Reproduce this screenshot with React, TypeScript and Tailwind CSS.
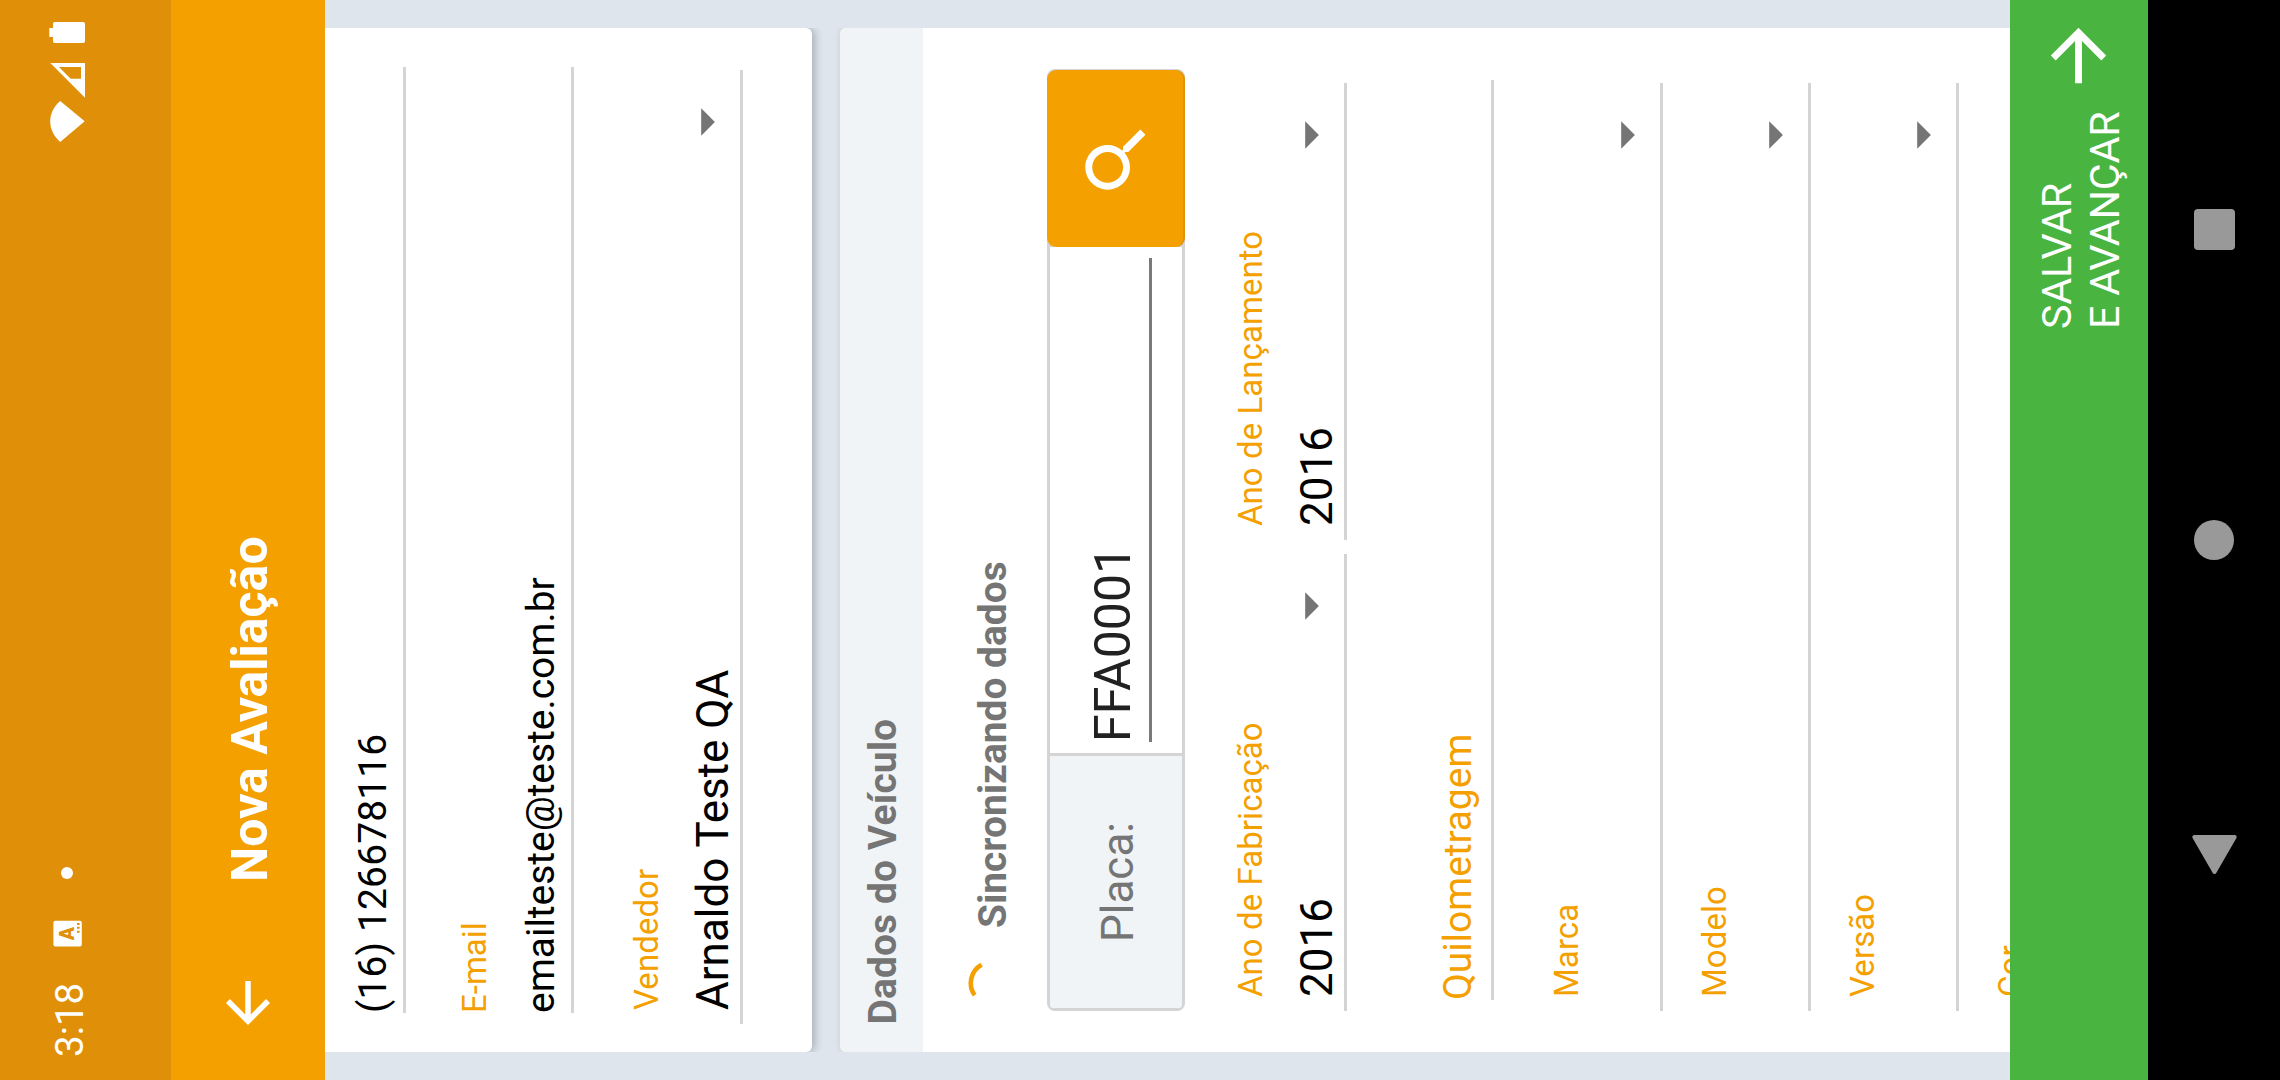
import React from "react";

const ARROW_FORWARD = "M12 4l-1.41 1.41L16.17 11H4v2h12.17l-5.58 5.59L12 20l8-8z";
const ARROW_BACK = "M20 11H7.83l5.59-5.59L12 4l-8 8 8 8 1.41-1.41L7.83 13H20v-2z";
const SEARCH =
  "M15.5 14h-.79l-.28-.27C15.41 12.59 16 11.11 16 9.5 16 5.91 13.09 3 9.5 3S3 5.91 3 9.5 5.91 16 9.5 16c1.61 0 3.09-.59 4.23-1.57l.27.28v.79l5 4.99L20.49 19l-4.99-5zm-6 0C7.01 14 5 11.99 5 9.5S7.01 5 9.5 5 14 7.01 14 9.5 11.99 14 9.5 14z";

function Caret() {
  return (
    <svg className="block h-[14px] w-[28px]" viewBox="0 0 28 14">
      <path d="M0.3 0.2h27.5L14 13.9z" fill="#757575" />
    </svg>
  );
}

function Rule() {
  return <div className="h-[3px] bg-[#d4d4d4]" />;
}

/* Caption, value with a drop-down caret, and an underline. */
function Select({ label, value, className }: { label: string; value?: string; className: string }) {
  return (
    <div className={className}>
      <div className="h-[39px] pl-[14px] text-[33px] leading-[39px] tracking-[0.06px] text-[#f4a000]">{label}</div>
      <div className="mt-[21px] flex h-[53px] justify-between pl-[14px] pr-[38px]">
        <span className="text-[44px] leading-[52px] text-black">{value}</span>
        <div className="pt-[14px]">
          <Caret />
        </div>
      </div>
      <Rule />
    </div>
  );
}

function StatusBar() {
  return (
    <header className="flex h-[171px] items-start justify-between bg-[#df9008] text-white">
      <div className="flex">
        <span className="ml-[23px] mt-[47px] w-[74px] text-[38.5px] leading-[45px]">3:18</span>
        <svg className="ml-[36px] mt-[53px] h-[29px] w-[27px]" viewBox="133 53 27 29">
          <rect x="133.6" y="53.4" width="25.7" height="28.4" rx="2" fill="#fff" />
          <text x="146.5" y="74" textAnchor="middle" fontFamily="Roboto, sans-serif" fontWeight="900" fontSize="19.5" fill="#df9008">
            A
          </text>
          <path d="M147.3 77h2v2.6h-2zM151.3 77h2v2.6h-2zM155 77h2v2.6h-2z" fill="#df9008" />
        </svg>
        <span className="ml-[41px] mt-[61px] h-[12px] w-[12px] rounded-full bg-white" />
      </div>
      <svg className="mr-[20px] mt-[48px] h-[52px] w-[124px]" viewBox="936 48 124 52" fill="#fff">
        <path d="M958.7 84.7L938 60.2C943.5 54 950.5 50.2 958.7 50.2S973.5 54 979 60.2z" />
        <path fillRule="evenodd" d="M1017 50.3V85H982.3zM1013 59L1001.3 70.7V81H1013z" />
        <path d="M1043 49.3h9V53h4.2q1.8 0 1.8 1.8v28.4q0 1.8-1.8 1.8h-17.4q-1.8 0-1.8-1.8V54.8q0-1.8 1.8-1.8h4.2z" />
      </svg>
    </header>
  );
}

function AppBar() {
  return (
    <div className="flex h-[154px] bg-[#f4a000] text-white">
      <svg className="ml-[44px] mt-[44px] h-[66px] w-[66px]" viewBox="0 0 24 24" fill="currentColor">
        <path d={ARROW_BACK} />
      </svg>
      <h1 className="ml-[88px] mt-[50px] text-[50px] font-bold leading-[58px]">Nova Avaliação</h1>
    </div>
  );
}

function ContactCard() {
  return (
    <section className="h-[487px] rounded-b-[6px] bg-white shadow-[0_3px_8px_rgba(0,0,0,0.24)]">
      <div className="ml-[39px] w-[946px] pt-[25px]">
        <div className="text-[39px] leading-[46px] tracking-[0.12px] text-black">(16) 126678116</div>
        <div className="mt-[7px]">
          <Rule />
        </div>
        <div className="mt-[49px] text-[33px] leading-[39px] text-[#f4a000]">E-mail</div>
        <div className="mt-[24px] text-[39px] leading-[46px] tracking-[-0.04px] text-black">emailteste@teste.com.br</div>
        <div className="mt-[7px]">
          <Rule />
        </div>
      </div>
      <Select label="Vendedor" value="Arnaldo Teste QA" className="ml-[28px] mt-[53px] w-[954px]" />
    </section>
  );
}

function PlateField() {
  return (
    <div className="ml-[41px] mt-[31px] flex h-[138px] w-[942px] rounded-[8px] bg-[#d4d4d4] p-[3px] pr-px">
      <div className="mr-[3px] flex w-[252px] items-center justify-center rounded-l-[3px] bg-[#f0f4f7] text-[44px] leading-[52px] text-[#757575]">
        <span className="pt-[4px]">Placa:</span>
      </div>
      <div className="flex-1 bg-white pl-[11px] pr-[11px] pt-[34px]">
        <div className="text-[50px] leading-[58px] text-[#212121]">FFA0001</div>
        <div className="mt-[7px] h-[3px] bg-[#7a7a7a]" />
      </div>
      <button className="-my-[3px] flex w-[177px] items-center justify-center rounded-[9px] border-b-2 border-[#e09208] bg-[#f4a000] text-white">
        <svg className="mt-[3px] h-[82.5px] w-[82.5px]" viewBox="0 0 24 24" fill="currentColor">
          <path d={SEARCH} />
        </svg>
      </button>
    </div>
  );
}

function VehicleCard() {
  return (
    <section className="mt-[28px] h-[1200px] rounded-t-[6px] bg-white shadow-[0_3px_8px_rgba(0,0,0,0.24)]">
      <h2 className="h-[83px] rounded-t-[6px] bg-[#f0f4f7] pl-[27.5px] pt-[20px] text-[39px] font-bold leading-[46px] tracking-[0.08px] text-[#757575]">
        Dados do Veículo
      </h2>
      <div className="flex h-[93px] pl-[44px]">
        <svg className="mt-[43px] h-[50px] w-[50px]" viewBox="72 966 50 50">
          <path d="M84.8 974.6A21 21 0 0 1 115.2 981.6" fill="none" stroke="#f4a000" strokeWidth="4.6" />
        </svg>
        <span className="ml-[30px] mt-[47px] text-[39px] font-bold leading-[46px] tracking-[-0.04px] text-[#757575]">
          Sincronizando dados
        </span>
      </div>
      <PlateField />
      <div className="ml-[41px] mt-[46px] flex gap-[14px]">
        <Select label="Ano de Fabricação" value="2016" className="w-[457px]" />
        <Select label="Ano de Lançamento" value="2016" className="w-[457px]" />
      </div>
      <div className="ml-[52px] mt-[88px] w-[920px]">
        <div className="text-[39px] leading-[46px] tracking-[-0.1px] text-[#f4a000]">Quilometragem</div>
        <div className="mt-[10px]">
          <Rule />
        </div>
      </div>
      <div className="ml-[41px] mt-[53px] flex w-[928px] flex-col gap-[32px]">
        <Select label="Marca" className="w-full" />
        <Select label="Modelo" className="w-full" />
        <Select label="Versão" className="w-full" />
        <Select label="Cor" className="w-full" />
      </div>
    </section>
  );
}

function SaveBar() {
  return (
    <button className="flex h-[138px] w-full justify-end bg-[#49b43f] text-left text-white">
      <span className="mt-[23px] w-[232px] text-[41.25px] leading-[48px] tracking-[-0.18px]">
        SALVAR
        <br />E AVANÇAR
      </span>
      <svg className="mr-[14px] mt-[27px] h-[83px] w-[83px]" viewBox="0 0 24 24" fill="currentColor">
        <path d={ARROW_FORWARD} />
      </svg>
    </button>
  );
}

function NavBar() {
  return (
    <nav className="flex h-[132px] items-center justify-between bg-black pl-[203px] pr-[209px]">
      <svg className="h-[50px] w-[46px]" viewBox="203 2189 46 50">
        <path
          d="M243 2194.3v40.4L208 2214.5z"
          fill="#999"
          stroke="#999"
          strokeWidth="4"
          strokeLinejoin="round"
        />
      </svg>
      <span className="h-[40px] w-[40px] rounded-full bg-[#999]" />
      <span className="h-[41px] w-[41px] rounded-[4px] bg-[#999]" />
    </nav>
  );
}

export default function App() {
  return (
    <div className="h-[1080px] w-[2280px] overflow-hidden">
      <div className="flex h-[2280px] w-[1080px] origin-top-left translate-y-[1080px] -rotate-90 flex-col whitespace-nowrap font-['Roboto',sans-serif]">
        <StatusBar />
        <AppBar />
        <main className="h-[1685px] overflow-hidden bg-[#dee5ed] px-[28px]">
          <div className="h-full overflow-hidden">
            <ContactCard />
            <VehicleCard />
          </div>
        </main>
        <SaveBar />
        <NavBar />
      </div>
    </div>
  );
}
